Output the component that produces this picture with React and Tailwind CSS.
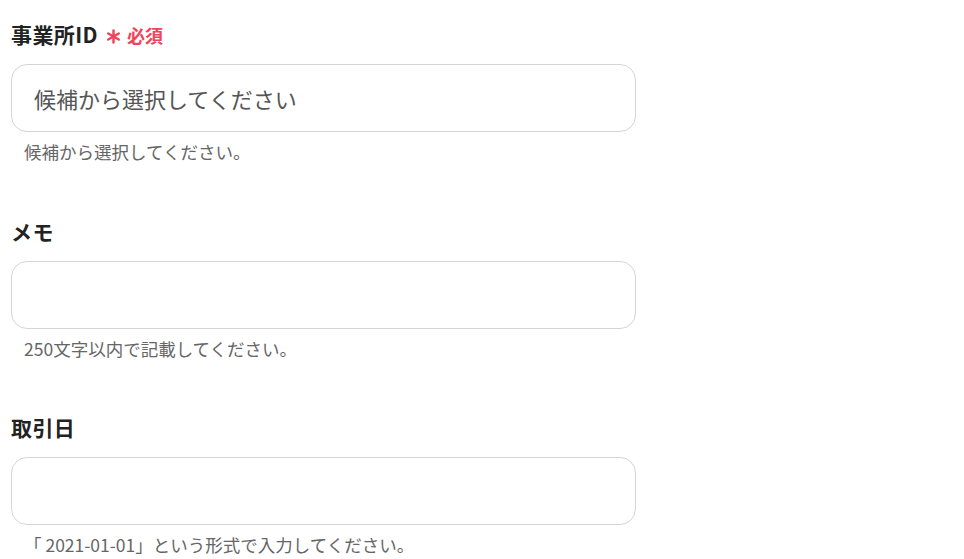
const fields = [
  { label: '事業所ID', required: true, placeholder: '候補から選択してください', help: '候補から選択してください。' },
  { label: 'メモ', required: false, placeholder: '', help: '250文字以内で記載してください。' },
  { label: '取引日', required: false, placeholder: '', help: '「 2021-01-01」という形式で入力してください。' },
];

function RequiredMark() {
  return (
    <svg width="15" height="15" viewBox="0 0 16 16" className="mt-[3px]">
      <g stroke="#f0435a" strokeWidth="2.6" strokeLinecap="round">
        <line x1="8" y1="1.5" x2="8" y2="14.5" />
        <line x1="2.4" y1="4.75" x2="13.6" y2="11.25" />
        <line x1="2.4" y1="11.25" x2="13.6" y2="4.75" />
      </g>
    </svg>
  );
}

export default function App() {
  return (
    <div
      className="min-h-screen bg-white pl-[11px] pt-[21px]"
      style={{ fontFamily: '"Noto Sans CJK JP", "Noto Sans", sans-serif' }}
    >
      <div className="w-[625px] flex flex-col gap-[53.5px]">
        {fields.map((f) => (
          <div key={f.label}>
            <div className="flex items-center h-[28px] text-[21px] font-bold text-[#222]">
              <span className="tracking-[0.02em]">{f.label}</span>
              {f.required && (
                <span className="ml-[8px] flex items-center gap-[6px] text-[#f0435a] text-[18px]">
                  <RequiredMark />
                  必須
                </span>
              )}
            </div>
            <input
              type="text"
              placeholder={f.placeholder}
              className="mt-[15px] block w-full h-[68px] rounded-[16px] border border-[#d3d5da] bg-white px-[22px] text-[22px] text-[#333] placeholder:text-[#555] outline-none"
            />
            <p className="mt-[8px] pl-[13px] text-[17.5px] leading-[24px] text-[#666]">{f.help}</p>
          </div>
        ))}
      </div>
    </div>
  );
}
